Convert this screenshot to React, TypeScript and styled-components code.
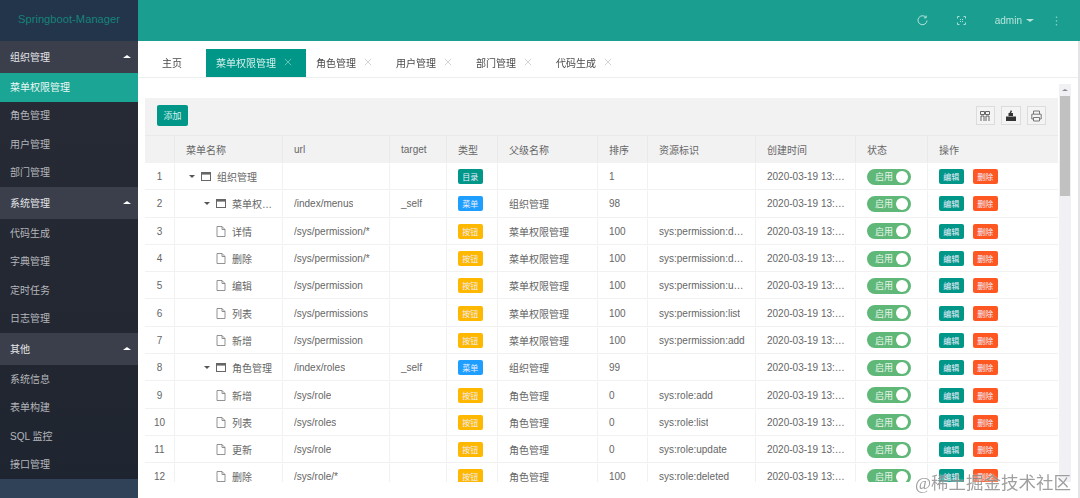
import React from "react";
import styled, { createGlobalStyle } from "styled-components";

const Global = createGlobalStyle`
  html, body { margin: 0; padding: 0; background: #fff; overflow: hidden; }
  #root { width: 1080px; height: 498px; }
  * { box-sizing: border-box; }
  body { font-family: "Liberation Sans", "Noto Sans CJK SC", sans-serif; font-size: 10px; }
`;

const Page = styled.div`
  position: relative; display: flex; width: 1080px; height: 498px; overflow: hidden; filter: blur(0.35px);
`;
const Sidebar = styled.aside`
  width: 138px; flex: none; display: flex; flex-direction: column;
  background: #2f4258; color: #c2c4c8;
`;
const Logo = styled.div`
  height: 41px; flex: none; display: flex; align-items: center; justify-content: center; padding-bottom: 4px;
  background: #23354b; color: #16837a; font-size: 11.2px;
`;
const Nav = styled.nav`
  display: flex; flex-direction: column; background: linear-gradient(180deg, #282b35, #1f2530);
`;
const GroupHead = styled.div`
  height: 32px; display: flex; align-items: center; justify-content: space-between; padding: 0 7px 2px 10px;
  background: #3b3f4c; color: #e4e5e8; font-size: 10px;
`;
const Caret = styled.i<{ $up?: boolean; $size?: number; $color?: string }>`
  display: block; width: 0; height: 0;
  border-left: ${(p) => p.$size ?? 4}px solid transparent;
  border-right: ${(p) => p.$size ?? 4}px solid transparent;
  ${(p) => (p.$up ? "border-bottom" : "border-top")}: ${(p) => (p.$size ?? 4) - 0.5}px solid ${(p) => p.$color ?? "#fff"};
`;
const NavItem = styled.div<{ $active?: boolean }>`
  height: 28.5px; display: flex; align-items: center; padding: 0 0 2px 10px; font-size: 10px;
  background: ${(p) => (p.$active ? "#1aa594" : "transparent")};
  color: ${(p) => (p.$active ? "#ecf8f6" : "#b4b6bb")};
`;
const Main = styled.main`
  flex: 1; min-width: 0; display: flex; flex-direction: column;
`;
const TopBar = styled.header`
  height: 41px; flex: none; display: flex; align-items: center; justify-content: flex-end;
  background: #1a9e8f; color: #b5e4dc;
`;
const TopIcon = styled.span<{ $mr: number }>`
  display: flex; align-items: center; margin-right: ${(p) => p.$mr}px;
`;
const UserName = styled.span`
  font-size: 10px; margin-right: 4px;
`;
const Tabs = styled.div`
  height: 37px; flex: none; display: flex; align-items: flex-end; padding-left: 14px;
  border-bottom: 1px solid #eceef0;
`;
const Tab = styled.div<{ $active?: boolean; $w: number; $mr?: number }>`
  width: ${(p) => p.$w}px; height: 28px; flex: none; display: flex; align-items: center; padding: 0 0 2px 10px;
  margin-right: ${(p) => p.$mr ?? 0}px; font-size: 10px;
  background: ${(p) => (p.$active ? "#009688" : "transparent")};
  color: ${(p) => (p.$active ? "#d7f0ec" : "#4a4a4a")};
`;
const TabClose = styled.svg`
  width: 8px; height: 8px; margin-left: 8px; flex: none;
`;
const Content = styled.div`
  flex: 1; min-height: 0; display: flex; padding: 20px 0 16px 7px; position: relative;
`;
const Panel = styled.section`
  width: 913px; flex: none; display: flex; flex-direction: column; overflow: hidden; background: #fff;
`;
const Toolbar = styled.div`
  height: 37px; flex: none; display: flex; align-items: center; justify-content: space-between;
  background: #f2f2f3; padding: 0 12px 2px 12px;
`;
const AddButton = styled.div`
  width: 31px; height: 21px; display: flex; align-items: center; justify-content: center;
  background: #009688; color: #d9f2ee; border-radius: 2px; font-size: 9px;
`;
const ToolIcons = styled.div`
  display: flex; gap: 6px;
`;
const ToolIcon = styled.div`
  width: 19.5px; height: 19px; display: flex; align-items: center; justify-content: center;
  border: 1px solid #dcdcdc; background: #f4f4f5;
`;
const Row = styled.div<{ $head?: boolean }>`
  height: ${(p) => (p.$head ? 28 : 27.3)}px; flex: none; display: grid;
  grid-template-columns: 30px 108px 107px 57px 51px 100px 50px 108px 100px 72px 130px;
  background: ${(p) => (p.$head ? "#f2f2f3" : "#fff")};
  color: #666; font-size: 10px;
`;
const Cell = styled.div<{ $center?: boolean; $head?: boolean; $tight?: boolean }>`
  display: flex; align-items: center; min-width: 0; white-space: nowrap; overflow: hidden;
  padding: 0 ${(p) => (p.$center ? 0 : p.$tight ? 8 : 10)}px 0 ${(p) => (p.$center ? 0 : 11)}px;
  justify-content: ${(p) => (p.$center ? "center" : "flex-start")};
  border-right: 1px solid ${(p) => (p.$head ? "#e9e9ea" : "#f1f1f2")};
  border-top: 1px solid ${(p) => (p.$head ? "#e9e9ea" : "transparent")};
  border-bottom: 1px solid ${(p) => (p.$head ? "transparent" : "#f1f1f2")};
  &:last-child { border-right: none; }
`;
const Clip = styled.span`
  overflow: hidden; text-overflow: ellipsis; white-space: nowrap;
`;
const Tree = styled.div<{ $level: number }>`
  display: flex; align-items: center; padding-left: ${(p) => p.$level * 15 + 2}px; min-width: 0;
`;
const TreeCaret = styled.span<{ $hidden: boolean }>`
  width: 8px; flex: none; display: flex; justify-content: center; margin-right: 5px;
  visibility: ${(p) => (p.$hidden ? "hidden" : "visible")};
`;
const TreeLabel = styled(Clip)`
  margin-left: 6px;
`;
const Badge = styled.span<{ $bg: string }>`
  width: 24.5px; height: 15px; display: flex; align-items: center; justify-content: center;
  background: ${(p) => p.$bg}; color: #eef; border-radius: 2px; font-size: 8px; flex: none;
`;
const Switch = styled.span`
  width: 44px; height: 16px; display: flex; align-items: center; justify-content: space-between;
  background: #5fb878; color: #e8f5eb; border-radius: 8px; font-size: 9px; padding: 0 3px 0 8px; flex: none;
`;
const Knob = styled.i`
  width: 12px; height: 12px; border-radius: 50%; background: #fff; display: block;
`;
const Actions = styled.div`
  display: flex; gap: 9.5px;
`;
const Scrollbar = styled.div`
  width: 12px; margin: -14px 0 0 1px; display: flex; flex-direction: column; align-items: center;
  background: #f1f0f4;
`;
const ScrollArrow = styled.div`
  height: 12px; flex: none; display: flex; align-items: center;
`;
const ScrollThumb = styled.div`
  width: 10px; height: 100px; background: #c1c1c1;
`;
const PageScroll = styled.div`
  position: absolute; right: 0; top: 41px; bottom: 0; width: 2px; background: #e4e4e6;
`;
const Watermark = styled.div`
  position: absolute; left: 915px; top: 473px; color: #8f8f8f; font-size: 17.5px; line-height: 20px;
  font-family: "Liberation Serif", "Noto Sans CJK SC", serif; white-space: nowrap; opacity: 0.85;
  text-shadow: 0 0 2px #fff;
`;

const CloseIcon = () => (
  <TabClose viewBox="0 0 8 8">
    <path d="M.8.8l6.4 6.4M7.2.8L.8 7.2" stroke="#c4c8c8" strokeWidth=".8" fill="none" />
  </TabClose>
);
const ActiveClose = () => (
  <TabClose viewBox="0 0 8 8">
    <path d="M.8.8l6.4 6.4M7.2.8L.8 7.2" stroke="#7fcdc3" strokeWidth=".8" fill="none" />
  </TabClose>
);
const FolderIcon = () => (
  <svg width="10" height="9" viewBox="0 0 10 9" style={{ flex: "none" }}>
    <rect x=".5" y=".5" width="9" height="8" fill="none" stroke="#666" />
    <rect x="0" y="0" width="10" height="2.6" fill="#666" />
  </svg>
);
const FileIcon = () => (
  <svg width="10" height="11" viewBox="0 0 10 11" style={{ flex: "none" }}>
    <path d="M1 .5h5l3 3v7H1z M6 .5v3h3" fill="none" stroke="#777" strokeWidth=".8" />
  </svg>
);

type Node = { n: string; level: number; kind: "dir" | "menu" | "btn"; url?: string; target?: string; parent?: string; order: string; res?: string };

const rows: Node[] = [
  { n: "组织管理", level: 0, kind: "dir", order: "1" },
  { n: "菜单权限管理", level: 1, kind: "menu", url: "/index/menus", target: "_self", parent: "组织管理", order: "98" },
  { n: "详情", level: 1, kind: "btn", url: "/sys/permission/*", parent: "菜单权限管理", order: "100", res: "sys:permission:detail" },
  { n: "删除", level: 1, kind: "btn", url: "/sys/permission/*", parent: "菜单权限管理", order: "100", res: "sys:permission:deleted" },
  { n: "编辑", level: 1, kind: "btn", url: "/sys/permission", parent: "菜单权限管理", order: "100", res: "sys:permission:update" },
  { n: "列表", level: 1, kind: "btn", url: "/sys/permissions", parent: "菜单权限管理", order: "100", res: "sys:permission:list" },
  { n: "新增", level: 1, kind: "btn", url: "/sys/permission", parent: "菜单权限管理", order: "100", res: "sys:permission:add" },
  { n: "角色管理", level: 1, kind: "menu", url: "/index/roles", target: "_self", parent: "组织管理", order: "99" },
  { n: "新增", level: 1, kind: "btn", url: "/sys/role", parent: "角色管理", order: "0", res: "sys:role:add" },
  { n: "列表", level: 1, kind: "btn", url: "/sys/roles", parent: "角色管理", order: "0", res: "sys:role:list" },
  { n: "更新", level: 1, kind: "btn", url: "/sys/role", parent: "角色管理", order: "0", res: "sys:role:update" },
  { n: "删除", level: 1, kind: "btn", url: "/sys/role/*", parent: "角色管理", order: "100", res: "sys:role:deleted" },
];

const typeBadge = {
  dir: { t: "目录", c: "#009688" },
  menu: { t: "菜单", c: "#1e9fff" },
  btn: { t: "按钮", c: "#ffb800" },
};

const nav = [
  { head: "组织管理", items: ["菜单权限管理", "角色管理", "用户管理", "部门管理"] },
  { head: "系统管理", items: ["代码生成", "字典管理", "定时任务", "日志管理"] },
  { head: "其他", items: ["系统信息", "表单构建", "SQL 监控", "接口管理"] },
];
const heads = ["菜单名称", "url", "target", "类型", "父级名称", "排序", "资源标识", "创建时间", "状态", "操作"];

export default function App() {
  return (
    <Page>
      <Global />
      <Sidebar>
        <Logo>Springboot-Manager</Logo>
        <Nav>
          {nav.map((g) => (
            <React.Fragment key={g.head}>
              <GroupHead>
                {g.head}
                <Caret $up />
              </GroupHead>
              {g.items.map((it) => (
                <NavItem key={it} $active={it === "菜单权限管理"}>{it}</NavItem>
              ))}
            </React.Fragment>
          ))}
        </Nav>
      </Sidebar>
      <Main>
        <TopBar>
          <TopIcon $mr={29}>
            <svg width="11" height="11" viewBox="0 0 11 11" fill="none" stroke="#b5e4dc" strokeWidth="1">
              <path d="M8.9 2.3A4.5 4.5 0 1 0 10 5.5" />
              <path d="M9.2.6v2.2H7" />
            </svg>
          </TopIcon>
          <TopIcon $mr={28.5}>
            <svg width="9" height="9" viewBox="0 0 9 9" fill="none" stroke="#a6dfd5" strokeWidth="1">
              <path d="M.5 2.5v-2h2M6.5.5h2v2M8.5 6.5v2h-2M2.5 8.5h-2v-2M3 3l1 1M6 3L5 4M3 6l1-1M6 6L5 5" />
            </svg>
          </TopIcon>
          <UserName>admin</UserName>
          <TopIcon $mr={20.5}>
            <Caret $size={4} $color="#b5e4dc" />
          </TopIcon>
          <TopIcon $mr={22.5}>
            <svg width="3" height="10" viewBox="0 0 3 10" fill="#8fd6ca">
              <circle cx="1.5" cy="1.2" r=".8" />
              <circle cx="1.5" cy="5" r=".8" />
              <circle cx="1.5" cy="8.8" r=".8" />
            </svg>
          </TopIcon>
        </TopBar>
        <Tabs>
          <Tab $w={40} $mr={14}>主页</Tab>
          <Tab $w={100} $active>菜单权限管理<ActiveClose /></Tab>
          {["角色管理", "用户管理", "部门管理", "代码生成"].map((t) => (
            <Tab key={t} $w={80}>{t}<CloseIcon /></Tab>
          ))}
        </Tabs>
        <Content>
          <Panel>
            <Toolbar>
              <AddButton>添加</AddButton>
              <ToolIcons>
                <ToolIcon>
                  <svg width="10" height="10" viewBox="0 0 10 10" fill="none" stroke="#555" strokeWidth=".9">
                    <path d="M.5.5h4v3h-4zM5.5.5h4v3h-4zM1 5h3M6 5h3M1 5v5M4 5v5M6 5v5M9 5v5" />
                  </svg>
                </ToolIcon>
                <ToolIcon>
                  <svg width="10" height="11" viewBox="0 0 10 11" fill="#333">
                    <path d="M0 6.5h10V11H0zM2.5 6V3h4.5v3z" />
                    <path d="M3.5 3l1.5-3 1 1.5-1 1.5z" />
                  </svg>
                </ToolIcon>
                <ToolIcon>
                  <svg width="11" height="12" viewBox="0 0 11 12" fill="none" stroke="#777" strokeWidth="1">
                    <path d="M2.5 4V1h6v3M2.5 9H.8V4.2h9.4V9H8.5M2.5 7.5h6V11h-6z" />
                  </svg>
                </ToolIcon>
              </ToolIcons>
            </Toolbar>
            <Row $head>
              <Cell $head />
              {heads.map((h) => <Cell key={h} $head>{h}</Cell>)}
            </Row>
            {rows.map((r, i) => (
              <Row key={i}>
                <Cell $center>{i + 1}</Cell>
                <Cell>
                  <Tree $level={r.level}>
                    <TreeCaret $hidden={r.kind === "btn"}><Caret $size={3.5} $color="#555" /></TreeCaret>
                    {r.kind === "btn" ? <FileIcon /> : <FolderIcon />}
                    <TreeLabel>{r.n}</TreeLabel>
                  </Tree>
                </Cell>
                <Cell><Clip>{r.url}</Clip></Cell>
                <Cell>{r.target}</Cell>
                <Cell><Badge $bg={typeBadge[r.kind].c}>{typeBadge[r.kind].t}</Badge></Cell>
                <Cell>{r.parent}</Cell>
                <Cell>{r.order}</Cell>
                <Cell><Clip>{r.res}</Clip></Cell>
                <Cell $tight><Clip>2020-03-19 13:14:15</Clip></Cell>
                <Cell><Switch>启用<Knob /></Switch></Cell>
                <Cell>
                  <Actions>
                    <Badge $bg="#009688">编辑</Badge>
                    <Badge $bg="#ff5722">删除</Badge>
                  </Actions>
                </Cell>
              </Row>
            ))}
          </Panel>
          <Scrollbar>
            <ScrollArrow><Caret $up $size={3} $color="#888" /></ScrollArrow>
            <ScrollThumb />
          </Scrollbar>
        </Content>
      </Main>
      <PageScroll />
      <Watermark>@稀土掘金技术社区</Watermark>
    </Page>
  );
}
